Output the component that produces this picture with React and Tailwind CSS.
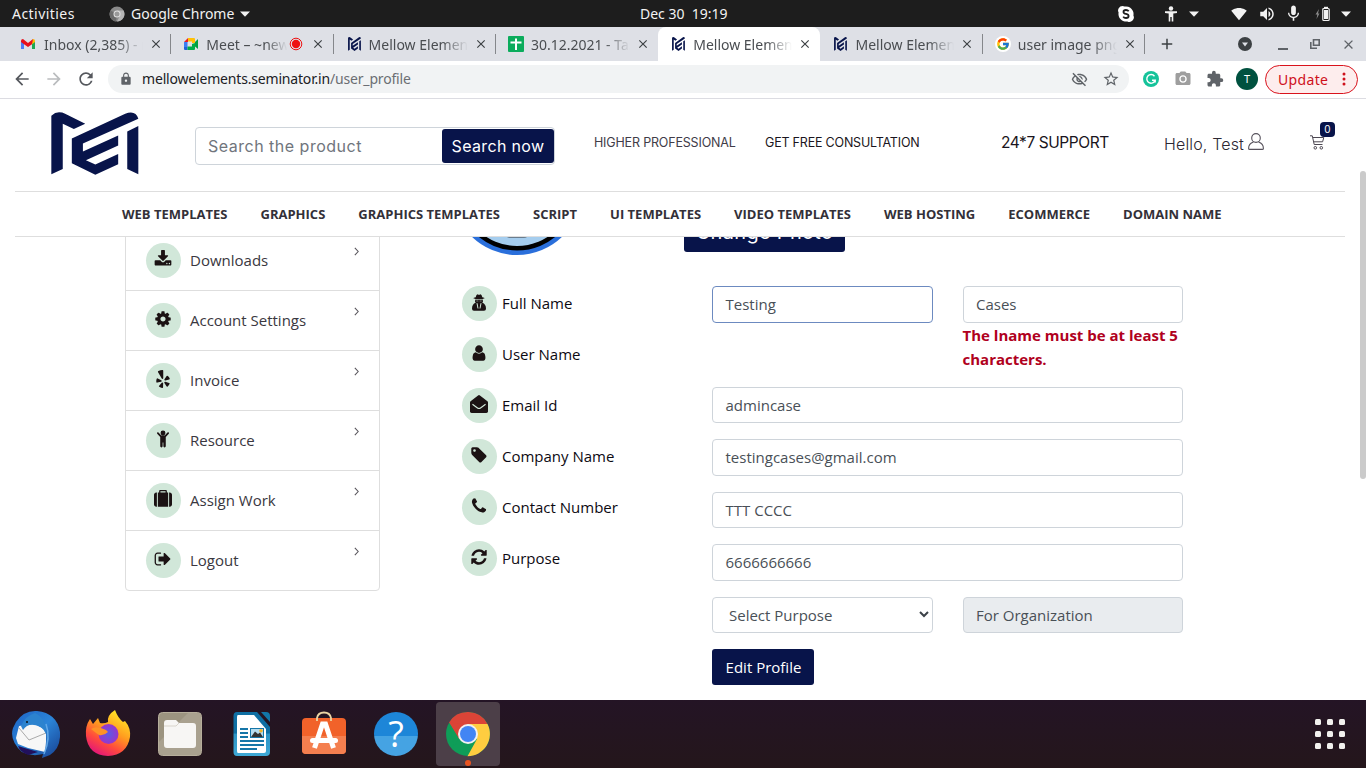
import React from "react";
import { FaYelp } from "react-icons/fa";
import {
  MdLock, MdStarBorder, MdOutlineVisibilityOff, MdExtension, MdPhotoCamera,
  MdClose, MdAdd, MdArrowBack, MdArrowForward, MdRefresh, MdSignalWifi4Bar,
  MdVolumeUp, MdMic,
} from "react-icons/md";
import { FcGoogle } from "react-icons/fc";

const UI = "font-['Noto_Sans',sans-serif]";
const POP = "font-['Inter',sans-serif]";

const PATHS = {
  download: "M1344 1344q0-26-19-45t-45-19-45 19-19 45 19 45 45 19 45-19 19-45zm256 0q0-26-19-45t-45-19-45 19-19 45 19 45 45 19 45-19 19-45zm128-224v320q0 40-28 68t-68 28h-1472q-40 0-68-28t-28-68v-320q0-40 28-68t68-28h465l135 136q58 56 136 56t136-56l136-136h464q40 0 68 28t28 68zm-325-569q17 41-14 70l-448 448q-18 19-45 19t-45-19l-448-448q-31-29-14-70 17-39 59-39h256v-448q0-26 19-45t45-19h256q26 0 45 19t19 45v448h256q42 0 59 39z",
  cog: "M1152 896q0-106-75-181t-181-75-181 75-75 181 75 181 181 75 181-75 75-181zm512-109v222q0 12-8 23t-20 13l-185 28q-19 54-39 91 35 50 107 138 10 12 10 25t-9 23q-27 37-99 108t-94 71q-12 0-26-9l-138-108q-44 23-91 38-16 136-29 186-7 28-36 28h-222q-14 0-24.5-8.5t-11.5-21.5l-28-184q-49-16-90-37l-141 107q-10 9-25 9-14 0-25-11-126-114-165-168-7-10-7-23 0-12 8-23 15-21 51-66.5t54-70.5q-27-50-41-99l-183-27q-13-2-21-12.5t-8-23.5v-222q0-12 8-23t19-13l186-28q14-46 39-92-40-57-107-138-10-12-10-24 0-10 9-23 26-36 98.5-107.5t94.5-71.5q13 0 26 10l138 107q44-23 91-38 16-136 29-186 7-28 36-28h222q14 0 24.5 8.5t11.5 21.5l28 184q49 16 90 37l142-107q9-9 24-9 13 0 25 10 129 119 165 170 7 8 7 22 0 12-8 23-15 21-51 66.5t-54 70.5q26 50 41 98l183 28q13 2 21 12.5t8 23.5z",
  child: "M896 60a245 245 0 1 1 0 490a245 245 0 1 1 0-490zM320 250q60-60 130-6l250 270q196 90 392 0l250-270q70-54 130 6q50 60 0 124l-300 330v920q-10 116-120 116t-120-116v-384h-72v384q-10 116-120 116t-120-116v-920l-300-330q-50-64 0-124z",
  suitcase: "M640 256h512v-128h-512v128zm-352 0v1408h-64q-92 0-158-66t-66-158v-960q0-92 66-158t158-66h64zm1120 0v1408h-1024v-1408h128v-160q0-40 28-68t68-28h576q40 0 68 28t28 68v160h128zm384 224v960q0 92-66 158t-158 66h-64v-1408h64q92 0 158 66t66 158z",
  signout: "M704 1440q0 4 1 20t.5 26.5-3 23.5-10 19.5-20.5 6.5h-320q-119 0-203.5-84.5t-84.5-203.5v-704q0-119 84.5-203.5t203.5-84.5h320q13 0 22.5 9.5t9.5 22.5q0 4 1 20t.5 26.5-3 23.5-10 19.5-20.5 6.5h-320q-66 0-113 47t-47 113v704q0 66 47 113t113 47h312l11.5 1 11.5 3 8 5.5 7 9 2 13.5zm928-544q0 26-19 45l-544 544q-19 19-45 19t-45-19-19-45v-288h-448q-26 0-45-19t-19-45v-384q0-26 19-45t45-19h448v-288q0-26 19-45t45-19 45 19l544 544q19 19 19 45z",
  user: "M1536 1399q0 109-62.5 187t-150.5 78h-854q-88 0-150.5-78t-62.5-187q0-85 8.5-160.5t31.5-152 58.5-131 94-89 134.5-34.5q131 128 313 128t313-128q76 0 134.5 34.5t94 89 58.5 131 31.5 152 8.5 160.5zm-256-887q0 159-112.5 271.5t-271.5 112.5-271.5-112.5-112.5-271.5 112.5-271.5 271.5-112.5 271.5 112.5 112.5 271.5z",
  mail: "M0 740q0-70 60-115L800 40q96-75 192 0l740 585q60 45 60 115v892q0 66-47 113t-113 47h-1472q-66 0-113-47t-47-113zM280 880l-70 95l500 365q186 120 372 0l500-365l-70-95l-500 365q-116 75-232 0z",
  tag: "M576 448q0-53-37.5-90.5t-90.5-37.5-90.5 37.5-37.5 90.5 37.5 90.5 90.5 37.5 90.5-37.5 37.5-90.5zm1067 576q0 53-37 90l-491 492q-39 37-91 37-53 0-90-37l-715-716q-38-37-64.5-101t-26.5-117v-416q0-52 38-90t90-38h416q53 0 117 26.5t102 64.5l715 714q37 39 37 91z",
  phone: "M1600 1240q0 27-10 70.5t-21 68.5q-21 50-122 106-94 51-186 51-27 0-53-3.5t-57.5-12.5-47-14.5-55.5-20.5-49-18q-98-35-175-83-127-79-264-216t-216-264q-48-77-83-175-3-9-18-49t-20.5-55.5-14.5-47-12.5-57.5-3.5-53q0-92 51-186 56-101 106-122 25-11 68.5-21t70.5-10q14 0 21 3 18 6 53 76 11 19 30 54t35 63.5 31 53.5q3 4 17.5 25t21.5 35.5 7 28.5q0 20-28.5 50t-62 55-62 53-28.5 46q0 9 5 22.5t8.5 20.5 14 24 11.5 19q76 137 174 235t235 174q2 1 19 11.5t24 14 20.5 8.5 22.5 5q18 0 46-28.5t53-62 55-62 50-28.5q14 0 28.5 7t35.5 21.5 25 17.5q25 15 53.5 31t63.5 35 54 30q70 35 76 53 3 7 3 21z",
  refresh: "M1639 1056q0 5-1 7-64 268-268 434.5t-478 166.5q-146 0-282.5-55t-243.5-157l-129 129q-19 19-45 19t-45-19-19-45v-448q0-26 19-45t45-19h448q26 0 45 19t19 45-19 45l-137 137q71 66 161 102t187 36q134 0 250-65t186-179q11-17 53-117 8-23 30-23h192q13 0 22.5 9.5t9.5 22.5zm25-800v448q0 26-19 45t-45 19h-448q-26 0-45-19t-19-45 19-45l138-138q-148-137-349-137-134 0-250 65t-186 179q-11 17-53 117-8 23-30 23h-199q-13 0-22.5-9.5t-9.5-22.5v-7q65-268 270-434.5t480-166.5q146 0 284 55.5t245 156.5l130-129q19-19 45-19t45 19 19 45z",
};

function Glyph({ name }) {
  return (
    <svg viewBox="0 0 1792 1792" className="size-[18px] overflow-visible" fill="currentColor">
      <path fillRule="evenodd" d={PATHS[name]} />
    </svg>
  );
}

function Agent() {
  return (
    <svg viewBox="0 0 42 50" className="h-[17px] w-[14px]" fill="currentColor">
      <path d="M11 9Q13 0 17 0Q21 3 25 0Q29 0 31 9Q38 10 38 12Q34 15 21 15Q8 15 4 12Q4 10 11 9z" />
      <path d="M10 16Q21 18 32 16L33 22L31 26Q42 30 42 44Q42 50 36 50H6Q0 50 0 44Q0 30 11 26L9 22z" />
      <path d="M15 27L18 43M27 27L24 43" fill="none" stroke="#d1e7d9" strokeWidth="3" />
      <path d="M13 20.500H19M23 20.500H29" stroke="#d1e7d9" strokeWidth="1.500" />
    </svg>
  );
}

function Bubble({ children }) {
  return (
    <span className="flex size-[35px] shrink-0 items-center justify-center rounded-full bg-[#d1e7d9] pr-px pb-[3px] text-[#1b1213]">
      {children}
    </span>
  );
}

function Logo({ className }) {
  return (
    <svg viewBox="154 37 262 188" preserveAspectRatio="none" className={className} fill="#08144a">
      <path d="M155 48Q166 38 178 38Q188 38 196 42L256 72L222 88L189 72V207L155 223Z" />
      <path d="M216 116L375 42Q406 30 414 57L249 131V155L354 107V137L258 181L286 194L354 162V193L286 224L216 190Z" />
      <path d="M381 95L414 79V223L381 207Z" />
    </svg>
  );
}

function Gmail() {
  return (
    <svg viewBox="0 0 16 16" className="-ml-px size-4">
      <path d="M1 4.5V13h3V7z" fill="#4f7cf5" />
      <path d="M15 4.5V13h-3V7z" fill="#1fa855" />
      <path d="M12 4.2L13 3q2 0 2 2v1l-3 2.2z" fill="#fbbc04" />
      <path d="M1 6V5q0-2 2-2l5 4 5-4-1 5.2L8 11 4 8.2z" fill="#e8101c" />
    </svg>
  );
}

function Meet() {
  return (
    <svg viewBox="0 0 16 16" className="size-4">
      <path d="M1 6l4-4v4z" fill="#ea1c24" />
      <path d="M1 6h3.5v5H1z" fill="#3c7df5" />
      <path d="M1 11h3.5v3H2q-1 0-1-1z" fill="#2063d8" />
      <path d="M5 2h6q1 0 1 1v4H9V5.5H5z" fill="#ffc107" />
      <path d="M4.500 10.500H9V8l3-1v6q0 1-1 1H4.500z" fill="#00ac47" />
      <path d="M12 6l3-3v10l-3-2.500z" fill="#00a040" />
    </svg>
  );
}

function Sheet() {
  return (
    <svg viewBox="0 0 16 16" className="size-4">
      <rect width="16" height="16" rx="1" fill="#0bac5c" />
      <path d="M7 2.500h2V5.500h4.500v2H9V14H7V7.500H2.500v-2H7z" fill="#fff" />
    </svg>
  );
}

function GoogleIcon() {
  return (
    <span className="flex size-4 items-center justify-center rounded-full bg-white">
      <FcGoogle className="size-[14px]" />
    </span>
  );
}

const FAV = "ml-[2px] h-[14px] w-[13px]";

const TABS = [
  { icon: <Gmail />, text: "Inbox (2,385) - nikita" },
  { icon: <Meet />, text: "Meet – ~new design", rec: true },
  { icon: <Logo className={FAV} />, text: "Mellow Elements" },
  { icon: <Sheet />, text: "30.12.2021 - Task Sheet" },
  { icon: <Logo className={FAV} />, text: "Mellow Elements", active: true },
  { icon: <Logo className={FAV} />, text: "Mellow Elements" },
  { icon: <GoogleIcon />, text: "user image png - Go" },
];

function Caret() {
  return (
    <svg viewBox="0 0 10 6" className="h-[6px] w-[10px]" fill="#f2f2f2"><path d="M0 .5h10L5 5.700z" /></svg>
  );
}

function TopBar() {
  return (
    <div className={`${UI} flex h-[27px] items-center bg-[#1d1d1d] text-[14px] text-[#f2f2f2]`}>
      <div className="w-[109px] pl-3 tracking-[0.45px]">Activities</div>
      <svg viewBox="0 0 16 16" className="size-4">
        <circle cx="8" cy="8" r="7.500" fill="#8a8a8a" />
        <path d="M8 8L1.500 4.500A7.500 7.500 0 0 0 7 15.500z" fill="#6b6b6b" />
        <path d="M8 4.500h6.600A7.500 7.500 0 0 1 8 15.500l3-6z" fill="#b5b5b5" />
        <circle cx="8" cy="8" r="3.500" fill="#e3e3e3" /><circle cx="8" cy="8" r="2.500" fill="#999" />
      </svg>
      <div className="ml-[6px] w-[109px] whitespace-nowrap">Google Chrome</div>
      <Caret />
      <div className="ml-[390px] w-[478px] whitespace-pre">Dec 30  19:19</div>
      <svg viewBox="0 0 16 16" className="size-4">
        <path d="M4.500 0A4.500 4.500 0 0 0 .6 6.600A7.500 7.500 0 0 0 9.400 15.400A4.500 4.500 0 0 0 15.400 9.400A7.500 7.500 0 0 0 6.600 .6A4.500 4.500 0 0 0 4.500 0z" fill="#fff" />
        <path d="M10.700 5.200Q9.800 4 8 4Q5.500 4 5.500 5.900Q5.500 7.400 8 7.900Q10.600 8.400 10.600 10Q10.600 12 8 12Q6 12 5.200 10.600" fill="none" stroke="#1d1d1d" strokeWidth="1.800" />
      </svg>
      <svg viewBox="0 0 14 16" className="ml-[30px] h-4 w-[14px]" fill="#f2f2f2">
        <circle cx="7" cy="2.500" r="2.200" /><path d="M1 5.300h12v1.700L9.300 7.600V15.500H7.700V11H6.300v4.500H4.700V7.600L1 7z" />
      </svg>
      <div className="ml-[11px]"><Caret /></div>
      <MdSignalWifi4Bar className="ml-[32px] size-4 text-[#f2f2f2]" />
      <MdVolumeUp className="ml-[11px] size-[18px] text-[#f2f2f2]" />
      <MdMic className="ml-[8px] size-[19px] text-[#f2f2f2]" />
      <svg viewBox="0 0 16 16" className="ml-[12px] size-4">
        <path d="M4 3L.5 8.500h1.800L1.500 13 4.500 7.500H3z" fill="#8a8a8a" />
        <rect x="7.800" y="2.500" width="6.400" height="12" rx="1" fill="none" stroke="#f2f2f2" strokeWidth="1.200" />
        <rect x="9" y="4" width="4" height="9" fill="#f2f2f2" /><rect x="9" y=".8" width="4" height="2" fill="#f2f2f2" />
      </svg>
      <div className="ml-[10px]"><Caret /></div>
    </div>
  );
}

function TabStrip() {
  return (
    <div className={`${UI} flex h-[34px] items-center bg-[#dee0e6] pl-[9px] text-[14px] text-[#4a4d51]`}>
      {TABS.map((t, i) => (
        <div key={i} className={`flex h-[34px] w-[162.300px] shrink-0 items-center pl-[12px] ${t.active ? "rounded-t-lg bg-white" : ""}`}>
          <span className="flex w-[23px]">{t.icon}</span>
          <span className={`overflow-hidden whitespace-nowrap ${t.rec ? "w-[83px]" : "w-[101px]"} [mask-image:linear-gradient(to_right,black_72%,transparent_98%)]`}>
            {t.text}
          </span>
          {t.rec && (
            <svg viewBox="0 0 14 14" className="mr-[6px] size-[14px] shrink-0">
              <circle cx="7" cy="7" r="5.800" fill="none" stroke="#e11" /><circle cx="7" cy="7" r="4.200" fill="#e11" />
            </svg>
          )}
          <MdClose className={`${t.rec ? "ml-[2px]" : "ml-[4px]"} size-[14px] shrink-0 text-[#3c4043]`} />
          <span className={`ml-auto h-5 w-px ${t.active || i === 3 ? "bg-transparent" : "bg-[#85878b]"}`} />
        </div>
      ))}
      <MdAdd className="ml-[13px] size-[18px] text-[#3c4043]" />
      <svg viewBox="0 0 14 14" className="ml-[62px] size-[14px]"><circle cx="7" cy="7" r="7" fill="#3c4043" /><path d="M4 5.500h6L7 9.500z" fill="#dee0e6" /></svg>
      <span className="ml-[26px] mt-[9px] h-[2px] w-[10px] bg-[#5f6368]" />
      <svg viewBox="0 0 10 10" className="ml-[22px] size-[10px]" fill="none" stroke="#5f6368" strokeWidth="1.600"><path d="M3.500 .8h5.700v5.500H3.500zM.8 3v6.200H7" /></svg>
      <MdClose className="ml-[21px] size-[15px] text-[#5f6368]" />
    </div>
  );
}

function Toolbar() {
  return (
    <div className={`${UI} flex h-[38px] items-center border-b border-[#dcdce2] bg-white pb-[1px] text-[14px]`}>
      <MdArrowBack className="ml-[12px] size-[20px] text-[#55585d]" />
      <MdArrowForward className="ml-[12px] size-[20px] text-[#babcbe]" />
      <MdRefresh className="ml-[12px] size-[20px] text-[#55585d]" />
      <div className="ml-[12px] flex h-7 w-[1021px] items-center rounded-full bg-[#f1f3f4]">
        <MdLock className="ml-[11px] size-[14px] text-[#5f6368]" />
        <span className="ml-[9px] flex-1 -mt-[2px] whitespace-nowrap tracking-[-0.180px] text-[#202124]">mellowelements.seminator.in<span className="text-[#6b6e73]">/user_profile</span></span>
        <MdOutlineVisibilityOff className="size-[17px] text-[#5f6368]" />
        <MdStarBorder className="ml-[14px] mr-[9px] size-[18px] text-[#5f6368]" />
      </div>
      <span className="ml-[14px] flex size-4 items-center justify-center rounded-full bg-[#15c39a]">
        <svg viewBox="0 0 12 12" className="size-3" fill="none" stroke="#fff" strokeWidth="1.400"><path d="M9.500 3.200A4.300 4.300 0 1 0 10.200 7.200H7M10.200 7.200V9.500" /></svg>
      </span>
      <MdPhotoCamera className="ml-[15px] size-[18px] text-[#9e9e9e]" />
      <MdExtension className="ml-[14px] size-[18px] text-[#5f6368]" />
      <span className="ml-[12px] flex size-[22px] items-center justify-center rounded-full bg-[#00513f] text-[11px] text-white">T</span>
      <span className="ml-[7px] flex h-[29px] w-[93px] items-center rounded-full border border-[#d9121c] bg-[#fdeded] pl-[12px] tracking-[0.350px] text-[#cf101b]">
        Update
        <svg viewBox="0 0 4 14" className="ml-[14px] h-[14px] w-1" fill="currentColor"><circle cx="2" cy="2" r="1.500" /><circle cx="2" cy="7" r="1.500" /><circle cx="2" cy="12" r="1.500" /></svg>
      </span>
    </div>
  );
}

const NAV = ["WEB TEMPLATES", "GRAPHICS", "GRAPHICS TEMPLATES", "SCRIPT", "UI TEMPLATES", "VIDEO TEMPLATES", "WEB HOSTING", "ECOMMERCE", "DOMAIN NAME"];

function Header() {
  return (
    <header className={`${POP} mx-[15px] h-[138px] w-[1330px] shrink-0 border-b border-[#dedede] bg-white`}>
      <div className="flex h-[92px] items-start">
        <Logo className="ml-[36px] mt-[13px] h-[63px] w-[88px]" />
        <div className="ml-[56px] mt-[28px] flex h-[38px] w-[360px] items-center rounded border border-[#ced4da] pl-3 text-[16px] text-[#70757c]">
          <span className="flex-1 whitespace-nowrap tracking-[0.500px]">Search the product</span>
          <button className="h-[34px] w-[112px] rounded-[3px] bg-[#08144a] whitespace-nowrap tracking-[0.350px] text-white">Search now</button>
        </div>
        <span className="ml-[39px] mt-[34px] w-[171px] whitespace-nowrap text-[12.500px] leading-5 tracking-[-0.170px] text-[#413c48]">HIGHER PROFESSIONAL</span>
        <span className="mt-[34px] w-[236px] whitespace-nowrap text-[12.500px] leading-5 tracking-[-0.200px] text-[#1a1520]">GET FREE CONSULTATION</span>
        <span className="mt-[34px] w-[163px] whitespace-nowrap text-[15.500px] leading-5 tracking-[-0.420px] text-[#1a1520]">24*7 SUPPORT</span>
        <span className="mt-[35px] w-[84px] whitespace-nowrap text-[16px] leading-5 font-light tracking-[0.150px] text-[#2c2733]">Hello, Test</span>
        <svg viewBox="0 0 16 17" className="mt-[34px] h-[17px] w-4" fill="none" stroke="#57525c" strokeWidth="1.100">
          <ellipse cx="8" cy="5" rx="4.300" ry="4.400" /><path d="M5.500 9Q.6 10.500 .6 15.400Q.6 16.400 1.800 16.400H14.200Q15.400 16.400 15.400 15.400Q15.400 10.500 10.500 9" />
        </svg>
        <div className="relative ml-[46px] mt-[36px]">
          <svg viewBox="0 0 15 15" className="size-[15px]" fill="none" stroke="#4d4852" strokeWidth="1">
            <path d="M0 .8h2.300L4.200 9.500H12.500M2.700 2.500H13.800L12.600 6.800H3.600" /><circle cx="5.300" cy="12.800" r="1.300" /><circle cx="11.300" cy="12.800" r="1.300" />
          </svg>
          <span className="absolute -top-[13px] left-[10px] flex h-[15px] w-[15px] items-center justify-center rounded bg-[#08144a] text-[10px] text-white">0</span>
        </div>
      </div>
      <nav className="flex h-[45px] items-center gap-[33px] border-t border-[#dedede] pl-[107px] pt-[2px] font-['Open_Sans',sans-serif] text-[13px] font-bold text-[#333038]">
        {NAV.map((n) => <span key={n} className="whitespace-nowrap">{n}</span>)}
      </nav>
    </header>
  );
}

const SIDE = [
  ["Downloads", <Glyph name="download" />],
  ["Account Settings", <Glyph name="cog" />],
  ["Invoice", <FaYelp className="size-[18px]" />],
  ["Resource", <Glyph name="child" />],
  ["Assign Work", <Glyph name="suitcase" />],
  ["Logout", <Glyph name="signout" />],
];

const LABELS = [
  ["Full Name", <Agent />],
  ["User Name", <Glyph name="user" />],
  ["Email Id", <Glyph name="mail" />],
  ["Company Name", <Glyph name="tag" />],
  ["Contact Number", <Glyph name="phone" />],
  ["Purpose", <Glyph name="refresh" />],
];

function Field({ children, className = "border-[#ced4da] bg-white" }) {
  return <div className={`flex h-[36.500px] items-center rounded border pl-[12.500px] text-[#495057] ${className}`}>{children}</div>;
}

function Content() {
  return (
    <main className="flex flex-1 items-start overflow-hidden bg-white pl-[125px] font-['Open_Sans',sans-serif] text-[15px]">
      <aside className="-mt-[7px] w-[255px] shrink-0 rounded-b border border-[#dedede]">
        {SIDE.map(([label, icon], i) => (
          <div key={label} className={`flex pl-5 pt-[12px] ${i < 5 ? "h-[60px] border-b border-[#dedede]" : "h-[59px]"}`}>
            <Bubble>{icon}</Bubble>
            <span className="ml-[9px] mt-[5px] leading-6 text-[#3a3740]">{label}</span>
            <svg viewBox="0 0 6 10" className="ml-auto mr-[20px] mt-[4px] h-[9px] w-[5px]" fill="none" stroke="#59565d" strokeWidth="1.300"><path d="M1 .7L5 5L1 9.300" /></svg>
          </div>
        ))}
      </aside>
      <section className="ml-[72px] w-[731px]">
        <div className="flex h-[49px]">
          <svg viewBox="0 0 130 130" className="-mt-[112px] size-[130px] shrink-0">
            <circle cx="65" cy="65" r="65" fill="#2a6fdb" /><circle cx="65" cy="65" r="60.500" fill="#000" />
            <circle cx="65" cy="65" r="56" fill="#a5cdee" /><rect x="54" y="104" width="22" height="9" rx="4" fill="#6a7d8e" />
          </svg>
          <button className={`${POP} -mt-[30px] ml-[102px] h-[45px] w-[161px] rounded-[3px] bg-[#08144a] pt-[5px] text-[20px] tracking-[0.300px] whitespace-nowrap text-white`}>Change Photo</button>
        </div>
        <div className="flex">
          <div className="ml-[10px] flex w-[250px] shrink-0 flex-col gap-4">
            {LABELS.map(([label, icon]) => (
              <div key={label} className="flex items-center text-[#0d0a12]">
                <Bubble>{icon}</Bubble>
                <span className="ml-[5px]">{label}</span>
              </div>
            ))}
          </div>
          <div className="flex w-[471px] shrink-0 flex-col gap-4">
            <div className="grid grid-cols-2 gap-[30px]">
              <Field className="border-[#6c8ac0] bg-white">Testing</Field>
              <div>
                <Field>Cases</Field>
                <p className="-mr-2 font-bold leading-6 text-[#b00020]">The lname must be at least 5<br />characters.</p>
              </div>
            </div>
            <Field>admincase</Field>
            <Field>testingcases@gmail.com</Field>
            <Field>TTT CCCC</Field>
            <Field>6666666666</Field>
            <div className="grid grid-cols-2 gap-[30px]">
              <Field>
                <span className="ml-[3.500px] flex-1">Select Purpose</span>
                <svg viewBox="0 0 10 7" className="mr-[3px] h-[7px] w-[10px]" fill="none" stroke="#3c4248" strokeWidth="2"><path d="M1 1l4 4 4-4" /></svg>
              </Field>
              <Field className="border-[#ced4da] bg-[#e9ecef]">For Organization</Field>
            </div>
            <button className="h-9 w-[102px] rounded-[3px] bg-[#08144a] pl-px whitespace-nowrap text-white">Edit Profile</button>
          </div>
        </div>
      </section>
    </main>
  );
}

const Thunderbird = () => (
  <svg viewBox="0 0 48 48" className="size-12">
    <defs><linearGradient id="tb" x1="0" y1="0" x2="1" y2="1"><stop offset="0" stopColor="#1d64c4" /><stop offset=".5" stopColor="#2b84d8" /><stop offset="1" stopColor="#173f8f" /></linearGradient></defs>
    <path d="M4 12Q12 0 25 1Q45 3 48 22Q49 38 38 45L30 48L31 44Q20 47 10 42Q-3 30 1 18z" fill="url(#tb)" />
    <path d="M6 36Q8 42 16 45L26 42z" fill="#21105c" />
    <path d="M7 16L22 14L34 20L34 32L33 42L16 38L6 34L4 28z" fill="#f7f7f7" />
    <path d="M7 18L17 30L34 23" fill="none" stroke="#aaa" strokeWidth="1" />
    <path d="M9 16Q13 6 23 3Q36 10 34 24Q30 15 22 15Q15 14 11 20z" fill="#2c83cf" />
    <path d="M34 14Q39 28 32 44" fill="none" stroke="#62a8e8" strokeWidth="1.500" />
    <circle cx="15" cy="12" r="1" fill="#111" />
  </svg>
);

const Firefox = () => (
  <svg viewBox="0 0 48 48" className="size-12">
    <defs>
      <linearGradient id="ff" x1=".8" y1=".1" x2=".3" y2="1"><stop offset="0" stopColor="#ffe226" /><stop offset=".4" stopColor="#ff9a1f" /><stop offset=".7" stopColor="#ff4a3d" /><stop offset="1" stopColor="#e3157a" /></linearGradient>
      <radialGradient id="ffb"><stop offset="0" stopColor="#5b5ae8" /><stop offset="1" stopColor="#9a35c9" /></radialGradient>
    </defs>
    <path d="M6 9L9 14L14 8L16 13Q20 14 24 12Q23 5 31 0Q34 8 39 12L41 11Q47 18 46 27Q43 45 24 46Q4 45 2 26Q1 16 6 9z" fill="url(#ff)" />
    <circle cx="24.500" cy="24" r="10" fill="url(#ffb)" />
    <path d="M7 19Q12 15 22 20L24 22Q20 26 15 25Q12 23 7 19z" fill="#ff9226" />
  </svg>
);

const Files = () => (
  <svg viewBox="0 0 48 48" className="size-12">
    <rect x="2.500" y="2.500" width="43" height="43" rx="4" fill="#9c9480" stroke="#b7af9c" />
    <path d="M3 32L32 3H41Q45 3 45 7V41Q45 45 41 45H7Q3 45 3 41z" fill="#a9a18f" />
    <path d="M8 13Q8 10 11 10H20L23 13H37Q40 13 40 16V35Q40 38 37 38H11Q8 38 8 35z" fill="#f7f6f4" />
    <path d="M8 16H20L23 13" fill="none" stroke="#d8d4cb" />
  </svg>
);

const Writer = () => (
  <svg viewBox="0 0 48 48" className="size-12">
    <defs><linearGradient id="wr" x1="0" y1="0" x2="0" y2="1"><stop offset=".48" stopColor="#0f6fa3" /><stop offset=".5" stopColor="#2b93c4" /><stop offset="1" stopColor="#3ea9d6" /></linearGradient></defs>
    <path d="M9 2H29L42 17V42Q42 46 38 46H9Q5.500 46 5.500 42V6Q5.500 2 9 2z" fill="url(#wr)" />
    <path d="M33 2H38Q42 2 42 6V12z" fill="#1276a8" />
    <path d="M10 5H26L38 19V41Q38 43 36 43H10Q9 43 9 41V7Q9 5 10 5z" fill="#fff" />
    <path d="M12 19H20M12 23H20M12 27H20M12 31H36M12 35H36M12 39H29" stroke="#1676a8" strokeWidth="2" />
    <rect x="22.500" y="18.500" width="13" height="9" fill="#b5dcef" stroke="#1676a8" /><circle cx="33" cy="20.800" r="1.800" fill="#f4b528" /><path d="M23 27L27 21.500L30 24L32 22.500L35 27z" fill="#333" />
  </svg>
);

const Software = () => (
  <svg viewBox="0 0 48 48" className="size-12">
    <rect x="2" y="8" width="44" height="36" rx="4" fill="#f1622a" /><path d="M2 26H46V40Q46 44 42 44H6Q2 44 2 40z" fill="#f47f4f" />
    <path d="M17 11V8Q18 2.500 24 2.500T31 8V11" fill="none" stroke="#ecd5a4" strokeWidth="1.800" />
    <path d="M14.500 38L22.500 14H25.500L33.500 38" fill="none" stroke="#fff" strokeWidth="5" />
    <rect x="10" y="28" width="28" height="5" rx="2.500" fill="#fff" />
  </svg>
);

const Help = () => (
  <span className="flex size-[44px] items-center justify-center rounded-full bg-linear-to-b from-[#1d86d8] from-54% to-[#45a3e3] to-55% font-['Open_Sans',sans-serif] text-[36px] leading-none text-white">?</span>
);

const ChromeIcon = () => (
  <svg viewBox="0 0 48 48" className="size-12">
    <circle cx="24" cy="24" r="22" fill="#0f9d58" />
    <path d="M24 24L5 12.500A22.200 22.200 0 0 1 43.500 14H24z" fill="#db4437" />
    <path d="M24 14H43.500A22.200 22.200 0 0 1 23.500 46.200L33 29z" fill="#ffcd40" />
    <path d="M5 12.500L15 29L24 24L20 14z" fill="#db4437" /><path d="M5 12.500L15 29L10 36z" fill="#0f9d58" />
    <circle cx="24" cy="24" r="10" fill="#f1f1f1" /><circle cx="24" cy="24" r="8" fill="#4285f4" />
  </svg>
);

const DOCK = [Thunderbird, Firefox, Files, Writer, Software, Help];

function Dock() {
  return (
    <div className="flex h-[68px] items-center bg-linear-to-b from-[#241425] to-[#24161b] pl-[4px]">
      {DOCK.map((D, i) => <div key={i} className="mr-2 flex size-16 items-center justify-center"><D /></div>)}
      <div className="relative flex size-16 items-center justify-center rounded bg-[#4c3f48]">
        <ChromeIcon />
        <span className="absolute bottom-0 left-[29px] size-[6px] rounded-full bg-[#e95420]" />
      </div>
      <div className="ml-auto mr-[21px] grid grid-cols-3 gap-[6px]">
        {Array.from({ length: 9 }, (_, i) => <span key={i} className="size-[6px] rounded-[1.500px] bg-[#f2f1ee]" />)}
      </div>
    </div>
  );
}

export default function App() {
  return (
    <div className="relative flex h-[768px] w-[1366px] flex-col overflow-hidden bg-white">
      <TopBar />
      <TabStrip />
      <Toolbar />
      <div className="flex min-h-0 flex-1 flex-col">
        <Header />
        <Content />
      </div>
      <Dock />
      <div className="absolute right-0 top-[171px] h-[308px] w-[6px] rounded-full bg-[#cbcbcb]" />
    </div>
  );
}
